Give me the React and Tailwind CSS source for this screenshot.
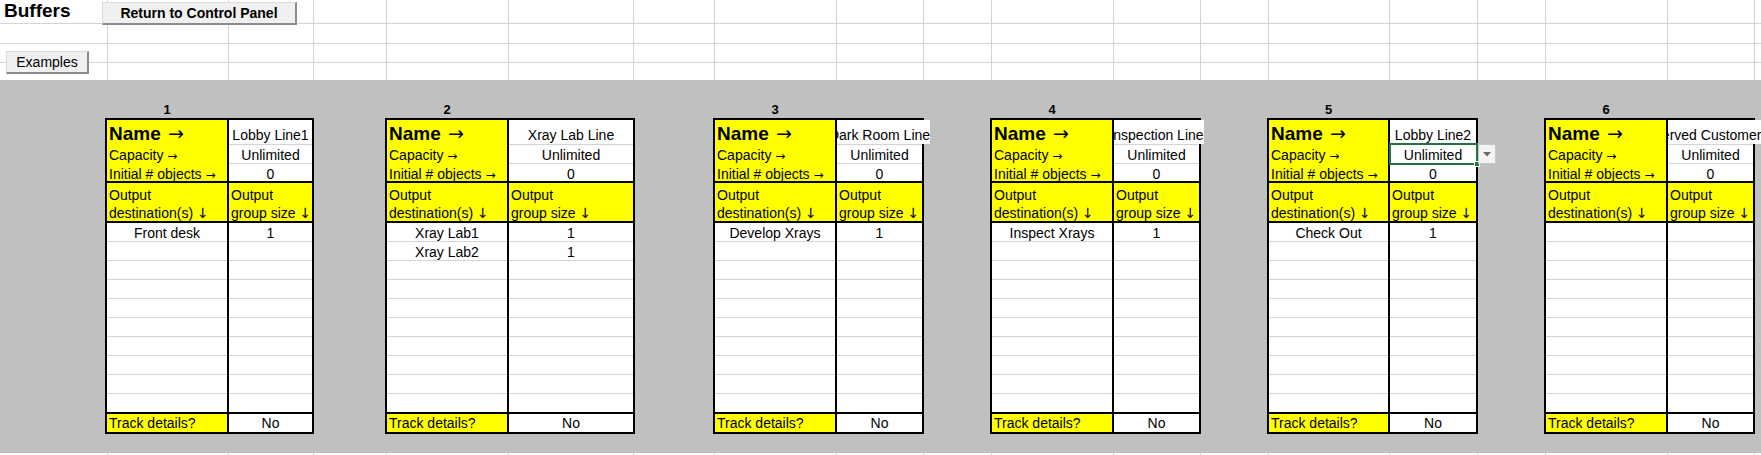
import React from "react";

const COLW = [
  "w-[108px]", "w-[121px]", "w-[85px]", "w-[73px]", "w-[122px]", "w-[125px]",
  "w-[81px]", "w-[122px]", "w-[87px]", "w-[68px]", "w-[122px]", "w-[87px]",
  "w-[68px]", "w-[121px]", "w-[88px]", "w-[68px]", "w-[122px]", "w-[87px]",
];

function GridRow({ h, bottom = true, first }) {
  return (
    <div className={`flex ${h} ${bottom ? "border-b border-[#d4d4d4]" : ""}`}>
      {COLW.map((w, i) => (
        <div key={i} className={`${w} shrink-0 border-r border-[#d4d4d4]`}>
          {i === 0 ? first : null}
        </div>
      ))}
      <div className="flex-1" />
    </div>
  );
}

const TABLES = [
  { n: 1, ml: "ml-[105px]", c1: "w-[120px]", c2: "w-[85px]", c2i: "w-[83px]", name: "Lobby Line1", dest: ["Front desk"], size: ["1"] },
  { n: 2, ml: "ml-[71px]", c1: "w-[120px]", c2: "w-[126px]", c2i: "w-[124px]", name: "Xray Lab Line", dest: ["Xray Lab1", "Xray Lab2"], size: ["1", "1"] },
  { n: 3, ml: "ml-[78px]", c1: "w-[120px]", c2: "w-[87px]", c2i: "w-[85px]", name: "Dark Room Line", over: true, dest: ["Develop Xrays"], size: ["1"] },
  { n: 4, ml: "ml-[66px]", c1: "w-[120px]", c2: "w-[87px]", c2i: "w-[85px]", name: "Inspection Line", over: true, dest: ["Inspect Xrays"], size: ["1"] },
  { n: 5, ml: "ml-[66px]", c1: "w-[119px]", c2: "w-[88px]", c2i: "w-[86px]", name: "Lobby Line2", sel: true, dest: ["Check Out"], size: ["1"] },
  { n: 6, ml: "ml-[66px]", c1: "w-[120px]", c2: "w-[87px]", c2i: "w-[85px]", name: "Served Customers", over: true, dest: [], size: [] },
];

const ROWS = [0, 1, 2, 3, 4, 5, 6, 7, 8, 9];

function Arrow({ ch }) {
  return <span className="font-['DejaVu_Sans',sans-serif] font-normal">{ch}</span>;
}

function DataCol({ values }) {
  return (
    <>
      {ROWS.map((r) => (
        <div
          key={r}
          className={`${r < 9 ? "h-[19px] border-b border-[#d4d4d4]" : "h-[18px]"} text-center whitespace-nowrap pt-[2px] leading-[17px]`}
        >
          {values[r] || ""}
        </div>
      ))}
    </>
  );
}

function Table({ t }) {
  return (
    <div className={`${t.ml} shrink-0 flex flex-col`}>
      <div className={`ml-[2px] ${t.c1} h-[16px] text-center text-[13px] font-bold leading-[16px]`}>{t.n}</div>
      <div className="border-2 border-black flex flex-col text-[14px] text-black">
        {/* name block */}
        <div className="flex h-[61px]">
          <div className={`${t.c1} shrink-0 bg-[#ffff00] pl-[2px]`}>
            <div className="h-[25px] pt-[2px] leading-[22px] text-[19px] font-bold whitespace-nowrap">
              Name <span className="ml-[2px] text-[19px]"><Arrow ch="→" /></span>
            </div>
            <div className="h-[19px] pt-[3px] leading-[15px] whitespace-nowrap">
              Capacity <span className="text-[12px]"><Arrow ch="→" /></span>
            </div>
            <div className="h-[17px] pt-[3px] leading-[15px] whitespace-nowrap">
              Initial # objects <span className="text-[12px]"><Arrow ch="→" /></span>
            </div>
          </div>
          <div className={`${t.c2} shrink-0 border-l-2 border-black bg-white`}>
            <div className="relative h-[25px] border-b border-[#d4d4d4]">
              {t.over ? (
                <div className="absolute left-0 top-0 h-[24px] w-[200px] overflow-hidden z-10">
                  <div className={`${t.c2i} h-full flex justify-center`}>
                    <div className="shrink-0 h-[24px] bg-white whitespace-nowrap pt-[7px] leading-[17px]">{t.name}</div>
                  </div>
                </div>
              ) : (
                <div className="text-center whitespace-nowrap pt-[7px] leading-[17px]">{t.name}</div>
              )}
            </div>
            <div className="relative h-[19px] border-b border-[#d4d4d4] text-center pt-[3px] leading-[15px]">
              Unlimited
              {t.sel ? (
                <>
                  <div className="absolute -left-[1px] -top-[2px] -right-[2px] -bottom-[2px] border-2 border-[#217346]" />
                  <div className="absolute -right-[4px] -bottom-[4px] w-[6px] h-[6px] bg-[#217346] border border-white" />
                  <div className="absolute left-[88px] -top-[1px] w-[18px] h-[20px] bg-[#f3f3f3] border border-[#c6c6c6] flex items-center justify-center">
                    <svg width="8" height="5" viewBox="0 0 8 5">
                      <polygon points="0,0 8,0 4,4.5" fill="#6a6a6a" />
                    </svg>
                  </div>
                </>
              ) : null}
            </div>
            <div className="h-[17px] text-center pt-[3px] leading-[15px]">0</div>
          </div>
        </div>
        {/* header */}
        <div className="flex h-[40px] border-t-2 border-black bg-[#ffff00]">
          <div className={`${t.c1} shrink-0 pl-[2px] pt-[3px] leading-[18px] whitespace-nowrap`}>
            Output
            <br />
            destination(s) <Arrow ch="↓" />
          </div>
          <div className={`${t.c2} shrink-0 border-l-2 border-black pl-[2px] pt-[3px] leading-[18px] whitespace-nowrap`}>
            Output
            <br />
            group size <Arrow ch="↓" />
          </div>
        </div>
        {/* data */}
        <div className="flex h-[191px] border-t-2 border-black bg-white">
          <div className={`${t.c1} shrink-0`}>
            <DataCol values={t.dest} />
          </div>
          <div className={`${t.c2} shrink-0 border-l-2 border-black`}>
            <DataCol values={t.size} />
          </div>
        </div>
        {/* track */}
        <div className="flex h-[20px] border-t-2 border-black">
          <div className={`${t.c1} shrink-0 bg-[#ffff00] pl-[2px] pt-[1px] leading-[17px] whitespace-nowrap`}>Track details?</div>
          <div className={`${t.c2} shrink-0 border-l-2 border-black bg-white text-center pt-[1px] leading-[17px]`}>No</div>
        </div>
      </div>
    </div>
  );
}

export default function App() {
  return (
    <div className="w-full overflow-hidden bg-white text-black font-['Liberation_Sans',Arial,sans-serif]">
      <div className="relative">
        <GridRow
          h="h-[24px]"
          first={<div className="pl-[4px] text-[19px] font-bold leading-[21px] whitespace-nowrap">Buffers</div>}
        />
        <GridRow h="h-[20px]" />
        <GridRow h="h-[19px]" />
        <GridRow h="h-[17px]" bottom={false} />
        <div className="absolute left-[102px] top-[2px] w-[195px] h-[23px] bg-[#f0f0f0] border-t border-l border-t-[#dadada] border-l-[#dadada] border-r-2 border-b-2 border-r-[#8c8c8c] border-b-[#8c8c8c] flex items-center justify-center text-[14px] font-bold leading-[16px] whitespace-nowrap">
          Return to Control Panel
        </div>
        <div className="absolute left-[6px] top-[51px] w-[83px] h-[23px] bg-[#f0f0f0] border-t border-l border-t-[#dadada] border-l-[#dadada] border-r-2 border-b-2 border-r-[#8c8c8c] border-b-[#8c8c8c] flex items-center justify-center text-[14px] leading-[16px] whitespace-nowrap">
          Examples
        </div>
      </div>
      <div className="bg-[#c0c0c0] h-[373px] pt-[22px] flex items-start">
        {TABLES.map((t) => (
          <Table key={t.n} t={t} />
        ))}
      </div>
      <GridRow h="h-[20px]" />
    </div>
  );
}
